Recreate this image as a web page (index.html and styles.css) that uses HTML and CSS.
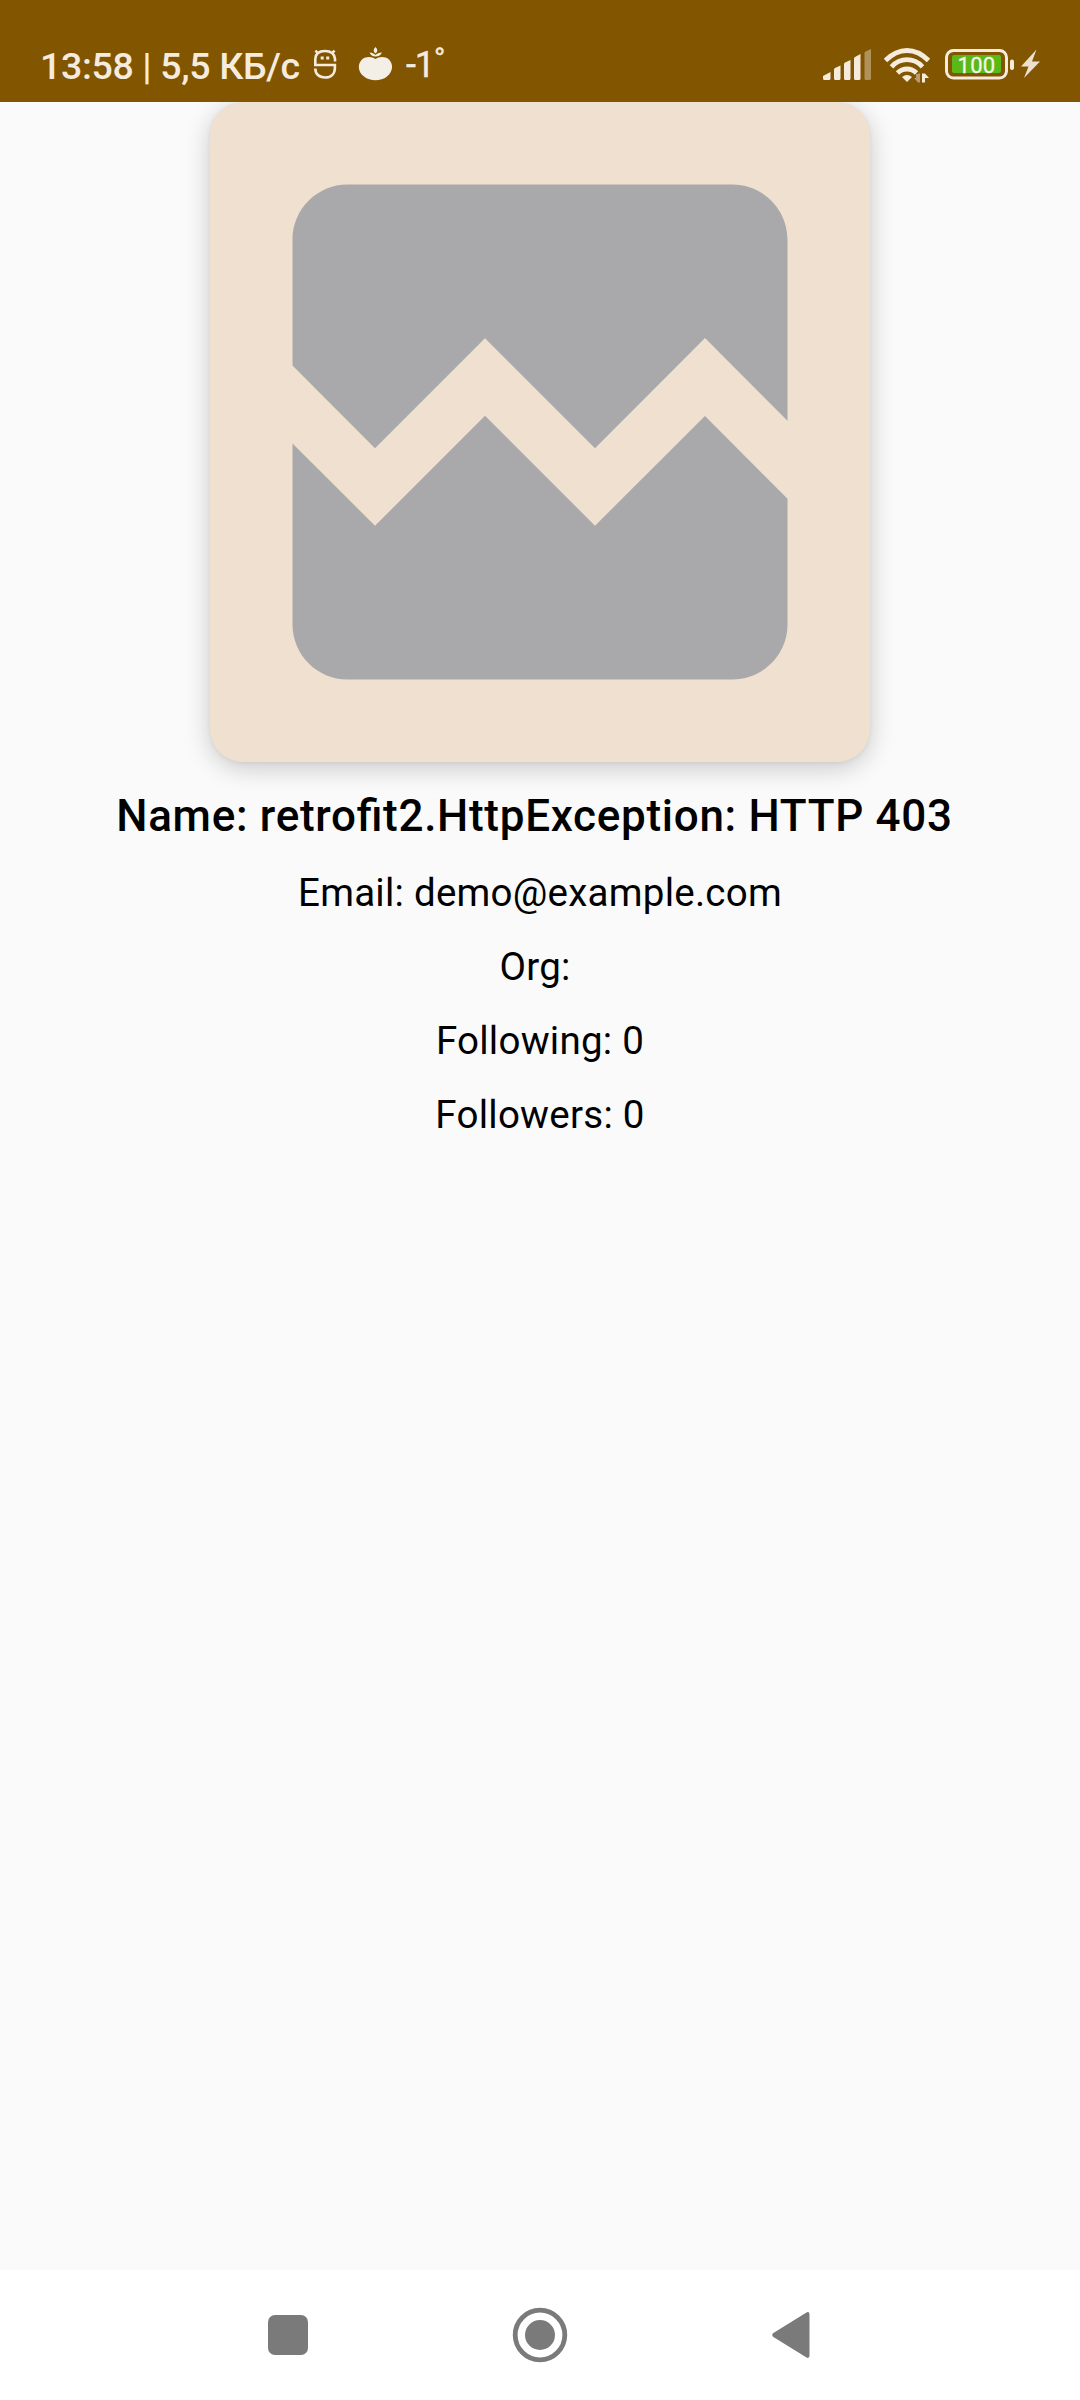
FILE: index.html
```html
<!DOCTYPE html>
<html lang="en">
<head>
<meta charset="utf-8">
<title>Profile</title>
<link rel="stylesheet" href="styles.css">
</head>
<body>
<div class="screen">
  <header class="status">
    <div class="status-left">
      <span class="clock">13:58 | 5,5 КБ/с</span>
      <svg class="bug" width="23" height="32" viewBox="0 0 23 32" fill="none" stroke="#f5ecde" stroke-width="2.6">
        <path d="M21 13.500V11C20.500 6 17 3 11 3S1.500 6 1.300 11V17H20.900V20C20.900 26 17 29.500 11 29.500S1.300 26 1.300 20.500M4 5.500L1.500 2.500M18 5.500L20.500 2.500"/>
        <path d="M8.200 8.500v3M13.700 8.500v3" stroke-width="3"/>
      </svg>
      <svg class="fruit" width="35" height="34" viewBox="0 0 35 34" fill="#f3eee6">
        <path d="M17.500 12C21 9.500 27 9 31 12.500C36 17.500 34.500 25 29 29.500C23 34.500 12 34.500 6 29.500C0 25 -1 17.500 4 12.500C8 9 14 9.500 17.500 12Z"/>
        <path d="M17.500 0C20 2.500 20 4.500 17.500 6.500C15 4.500 15 2.500 17.500 0ZM11.500 5.500C14 5.500 16 6.500 17.500 8C19 6.500 21 5.500 24 5.500C22.500 8.500 20 9.500 17.500 9.500S13 8.500 11.500 5.500Z"/>
      </svg>
      <span class="temp">-1˚</span>
    </div>
    <div class="status-right">
      <svg width="49" height="32" viewBox="0 0 49 32" fill="#f5ecde">
        <path d="M0 27L7.500 23V29.500Q7.500 31 6 31H1.500Q0 31 0 29.500ZM11 20.500Q11 19.500 12 19L17.500 16.500V29.500Q17.500 31 16 31H12.500Q11 31 11 29.500ZM21 15Q21 14 22 13.500L27.500 11V29.500Q27.500 31 26 31H22.500Q21 31 21 29.500ZM31 9.500Q31 8.500 32 8L37.500 5V29.500Q37.500 31 36 31H32.500Q31 31 31 29.500Z"/>
        <path opacity=".4" d="M41.500 4Q41.500 3 42.500 2.500L48 0V29.500Q48 31 46.500 31H43Q41.500 31 41.500 29.500Z"/>
      </svg>
      <svg class="wifi" width="47" height="36" viewBox="0 0 47 36">
        <g fill="none" stroke="#f5ecde" stroke-width="4.800">
          <path d="M1.500 13.500Q11.500 3.500 23 3.500T44.500 13.500"/>
          <path d="M7.500 19.800Q14 12.700 23 12.700T38.500 19.800"/>
          <path d="M13.500 26Q17.500 22 23 22T32.500 26"/>
        </g>
        <path fill="#f5ecde" d="M18 30Q23 26 28 30L23 35Z"/>
        <path fill="#b99c6d" d="M34 27V35.500L30 31H32V27ZM34 26.500H36V35.500H34Z"/>
        <path fill="#f5ecde" d="M38 26.500H41L45 31H41V35.500H38Z"/>
      </svg>
      <svg class="battery" width="70" height="32" viewBox="0 0 70 32">
        <rect x="1.500" y="1.500" width="60" height="27.500" rx="7" fill="none" stroke="#f5ecde" stroke-width="3"/>
        <rect x="7" y="6" width="49" height="18" rx="2" fill="#5bb917"/>
        <rect x="65" y="10.500" width="4" height="10.500" rx="2" fill="#f5ecde"/>
        <text class="level" x="31.500" y="23.800" text-anchor="middle">100</text>
      </svg>
      <svg class="bolt" width="19" height="30" viewBox="0 0 19 30" fill="#ece1cf">
        <path d="M15.500 .5L0 17.500H7.500L3 29L19 12.500H11Z"/>
      </svg>
    </div>
  </header>
  <main class="profile">
    <div class="card">
      <svg width="660" height="660" viewBox="0 0 24 24" fill="#a9a9ab">
        <path d="M21 5v6.590l-3-3.010-4 4.010-4-4-4 4-3-3.010V5c0-1.100.9-2 2-2h14c1.100 0 2 .9 2 2zM18 11.420l3 3.010V19c0 1.100-.9 2-2 2H5c-1.100 0-2-.9-2-2v-6.580l3 2.990 4-4 4 4z"/>
      </svg>
    </div>
    <h1 class="name">Name: retrofit2.HttpException: HTTP 403</h1>
    <p class="line">Email: demo@example.com</p>
    <p class="line">Org:&nbsp;</p>
    <p class="line">Following: 0</p>
    <p class="line">Followers: 0</p>
  </main>
  <nav class="navbar">
    <svg width="40" height="40" viewBox="0 0 40 40"><rect width="40" height="40" rx="7"/></svg>
    <svg width="56" height="56" viewBox="0 0 56 56"><circle cx="28" cy="28" r="24.800" fill="none" stroke="#7a7a7a" stroke-width="4.800"/><circle cx="28" cy="28" r="15"/></svg>
    <svg width="38" height="48" viewBox="0 0 38 48"><path d="M1 22.300L34.500 1.400Q37.500 .3 37.500 3.500V44.500Q37.500 47.700 34.500 46.600L1 25.700Q-.5 24 1 22.300Z"/></svg>
  </nav>
</div>
</body>
</html>
```
FILE: styles.css
```css
body {
  margin: 0;
  font-family: Roboto, sans-serif;
}

.screen {
  display: flex;
  flex-direction: column;
  width: 1080px;
  height: 2400px;
  background: #fafafa;
}

svg {
  display: block;
  flex: none;
}

.status {
  display: flex;
  justify-content: space-between;
  box-sizing: border-box;
  height: 102px;
  padding: 0 40px;
  background: #825500;
  color: #f5ecde;
  z-index: 1;
}

.status-left,
.status-right {
  display: flex;
  align-items: flex-start;
}

.clock {
  width: 262px;
  margin-top: 44px;
  font-size: 37.5px;
  line-height: 44px;
  font-weight: 500;
  letter-spacing: -.35px;
  white-space: nowrap;
}

.bug {
  margin: 48px 0 0 12px;
}

.fruit {
  margin: 47px 0 0 21px;
}

.temp {
  margin: 44px 0 0 13px;
  font-size: 36px;
  line-height: 42px;
  letter-spacing: -1.2px;
  -webkit-text-stroke: .4px currentColor;
}

.status-right {
  padding-top: 49px;
}

.wifi {
  margin: -2px 0 0 12px;
}

.battery {
  margin-left: 14px;
}

.level {
  font-size: 22px;
  letter-spacing: .3px;
  fill: #f5f5e8;
  stroke: #f5f5e8;
  stroke-width: .3px;
}

.bolt {
  margin-left: 6px;
}

.profile {
  display: flex;
  flex: 1;
  flex-direction: column;
  align-items: center;
}

.card {
  width: 660px;
  height: 660px;
  border-radius: 33px;
  background: #efe0cf;
  box-shadow: 0 6px 26px rgba(0, 0, 0, .2), 0 1px 4px rgba(0, 0, 0, .06);
}

.name {
  margin: 22px 11px 0 0;
  font-size: 44px;
  line-height: 64px;
  font-weight: 500;
  letter-spacing: .7px;
  font-feature-settings: "liga" 1;
  white-space: nowrap;
  color: #000;
}

.line {
  margin: 0;
  font-size: 38.5px;
  line-height: 74px;
  letter-spacing: .25px;
  color: #000;
}

.name + .line {
  margin-top: 8px;
}

.navbar {
  display: flex;
  align-items: center;
  justify-content: space-between;
  box-sizing: border-box;
  height: 130px;
  padding: 0 270px 0 268px;
  background: #fff;
  fill: #7a7a7a;
}
```
